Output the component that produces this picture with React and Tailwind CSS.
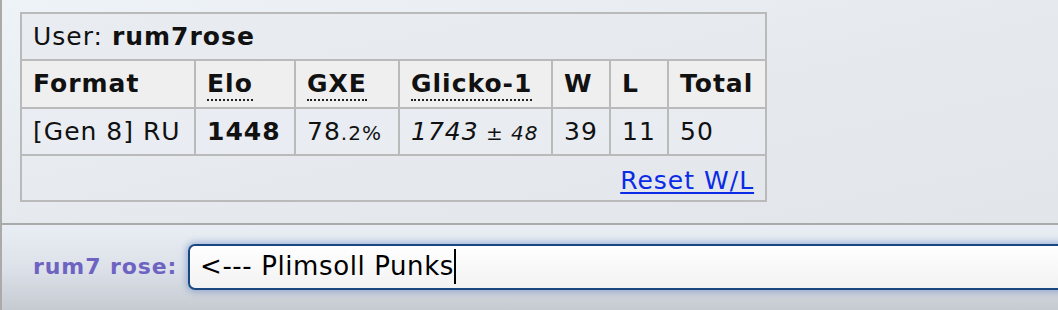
import React from "react";

const cell = "border-2 border-[#bababa] px-[11px] text-left align-middle";

function Abbr({ children }) {
  return (
    <abbr className="border-b-2 border-dotted border-[#222] pb-[1px]" style={{ textDecoration: "none" }}>
      {children}
    </abbr>
  );
}

function Ladder() {
  return (
    <table className="border-collapse table-fixed w-[745px] text-[25px] tracking-[1px] text-[#111]">
      <colgroup>
        <col className="w-[174px]" />
        <col className="w-[100px]" />
        <col className="w-[104px]" />
        <col className="w-[153px]" />
        <col className="w-[58px]" />
        <col className="w-[58px]" />
        <col className="w-[98px]" />
      </colgroup>
      <tbody>
        <tr className="h-[47px] bg-[#e6eaef]/60">
          <td colSpan={7} className={cell}>
            User: <strong>rum7rose</strong>
          </td>
        </tr>
        <tr className="h-[48px] bg-[#efefef]">
          <th className={cell}>Format</th>
          <th className={cell}><Abbr>Elo</Abbr></th>
          <th className={cell}><Abbr>GXE</Abbr></th>
          <th className={cell}><Abbr>Glicko-1</Abbr></th>
          <th className={cell}>W</th>
          <th className={cell}>L</th>
          <th className={cell}>Total</th>
        </tr>
        <tr className="h-[47px] bg-[#e9edf2]/70">
          <td className={cell}>[Gen 8] RU</td>
          <td className={cell}><strong>1448</strong></td>
          <td className={cell}>78<span className="text-[20px]">.2%</span></td>
          <td className={cell}>
            <em>1743<span className="text-[20px]"> ± 48</span></em>
          </td>
          <td className={cell}>39</td>
          <td className={cell}>11</td>
          <td className={cell}>50</td>
        </tr>
        <tr className="h-[46px]">
          <td colSpan={7} className={`${cell} text-right pt-[6px]`}>
            <a href="#" className="text-[#0b2be6] underline underline-offset-[3px] decoration-[2px]">
              Reset W/L
            </a>
          </td>
        </tr>
      </tbody>
    </table>
  );
}

export default function App() {
  return (
    <div
      className="w-[1058px] h-[310px] overflow-hidden flex flex-col"
      style={{ fontFamily: '"DejaVu Sans", Verdana, sans-serif' }}
    >
      <div className="h-[225px] border-l-2 border-b-2 border-[#aaaaaa] bg-gradient-to-br from-[#eef3f7] via-[#e6eaef] to-[#e2e6ea] pl-[18px] pt-[12px]">
        <Ladder />
      </div>

      {/* chat input bar */}
      <div className="flex-1 border-l-2 border-[#aaaaaa] bg-gradient-to-b from-[#e9eef4] via-[#dde2ea] to-[#c6cad1] flex items-center pl-[31px] pb-[2px]">
        <span className="w-[155px] shrink-0 text-[22px] tracking-[0.9px] font-bold text-[#6f63c2] whitespace-nowrap">rum7 rose:</span>
        <div className="flex-1 h-[46px] -mr-[20px] rounded-l-[7px] border-2 border-[#1b4781] bg-gradient-to-b from-white to-[#f2f2f2] shadow-[0_0_6px_2px_rgba(80,120,190,0.45)] flex items-center pl-[10px] text-[26px] tracking-[0.6px] text-black whitespace-pre">
          {"<--- Plimsoll Punks"}
          <span className="inline-block w-[2px] h-[35px] bg-black" />
        </div>
      </div>
    </div>
  );
}
